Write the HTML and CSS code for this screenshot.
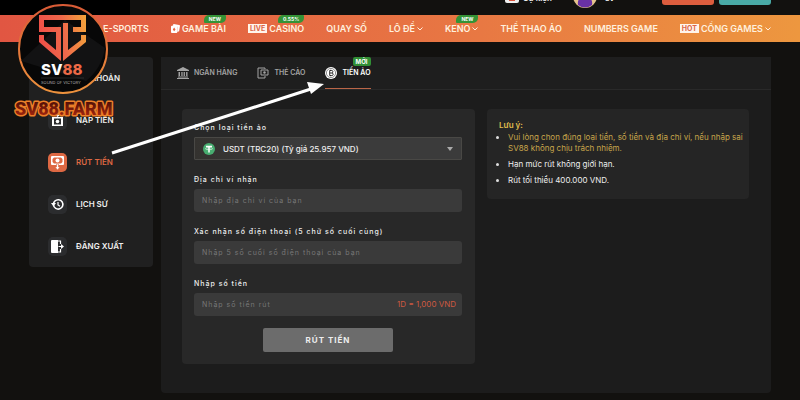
FILE: index.html
```html
<!DOCTYPE html>
<html lang="vi">
<head>
<meta charset="utf-8">
<meta name="viewport" content="width=device-width, initial-scale=1">
<title>SV88 - Rút tiền</title>
<link rel="stylesheet" href="styles.css">
</head>
<body>
<header class="topbar">
  <a class="event" href="#"><svg class="event-icon" viewBox="0 0 14 14"><rect width="14" height="14" rx="2" fill="#eee"/><path d="M4 7h6v5H4z" fill="#d9533c"/></svg>Sự kiện</a>
  <svg class="avatar" viewBox="0 0 26 26"><circle cx="13" cy="13" r="12" fill="#e6c48d"/><path d="M6 22q-1-6 4-8l3 2 3-2q5 2 4 8-7 5-14 0" fill="#6931a5"/><circle cx="13" cy="11" r="5" fill="#8042c1"/></svg>
  <span class="user">sv</span>
  <button class="top-button" type="button" aria-label="Nạp tiền"></button>
  <button class="top-button teal" type="button" aria-label="Rút tiền"></button>
</header>
<nav class="nav">
  <a href="#">E-SPORTS</a>
  <a href="#"><svg class="cards" viewBox="0 0 10 10"><path d="M3 0l6 1q1 0 1 1L9 8l-2 1V3L2 2V1z" fill="#fff"/><path fill-rule="evenodd" d="M1 2h5q1 0 1 1v6q0 1-1 1H1Q0 10 0 9V3q0-1 1-1m2.500 2L2 6l1.500 2L5 6z" fill="#fff"/></svg>GAME BÀI<span class="flag">NEW</span></a>
  <a href="#"><span class="tag">LIVE</span>CASINO<span class="flag">0.55%</span></a>
  <a href="#">QUAY SỐ</a>
  <a href="#">LÔ ĐỀ<svg class="chevron" viewBox="0 0 6 4"><path d="M.5.5L3 3 5.500.5"/></svg></a>
  <a href="#">KENO<svg class="chevron" viewBox="0 0 6 4"><path d="M.5.5L3 3 5.500.5"/></svg><span class="flag">NEW</span></a>
  <a href="#">THỂ THAO ẢO</a>
  <a href="#">NUMBERS GAME</a>
  <a href="#"><span class="tag">HOT</span>CỔNG GAMES<svg class="chevron" viewBox="0 0 6 4"><path d="M.5.5L3 3 5.500.5"/></svg></a>
</nav>
<div class="layout">
  <aside class="sidebar">
    <a href="#"><svg viewBox="0 0 19 19"><circle cx="9.500" cy="7" r="3"/><path d="M4 15q0-4 5.500-4t5.500 4z"/></svg>TÀI KHOẢN</a>
    <a href="#"><svg viewBox="0 0 19 19"><path fill-rule="evenodd" d="M4 6h11v9H4zm2 1.500v6h7v-6z"/><circle cx="9.500" cy="10.500" r="1.800"/><path d="M8.500 2h2v2H12L9.500 6 7 4h1.500z"/></svg>NẠP TIỀN</a>
    <a class="active" href="#"><svg viewBox="0 0 19 19"><path fill-rule="evenodd" d="M4 3h11q1 0 1 1v7q0 1-1 1H4q-1 0-1-1V4q0-1 1-1m2 1.500L4.500 6v3L6 10.500h7L14.500 9V6L13 4.500z"/><circle cx="9.500" cy="7.500" r="2"/><path d="M8.500 11h2v3H12l-2.500 3L7 14h1.500z" stroke="#dd6843" stroke-width=".6"/></svg>RÚT TIỀN</a>
    <a href="#"><svg viewBox="0 0 19 19"><path d="M5.500 10a4.700 4.700 0 1 0 1.400-4A4.700 4.700 0 0 0 5.500 9" fill="none" stroke="#fff" stroke-width="1.600"/><path d="M3 8h5l-2.500 3.500z"/><path d="M10 7v3l2 1.200" fill="none" stroke="#fff" stroke-width="1.200"/></svg>LỊCH SỬ</a>
    <a href="#"><svg viewBox="0 0 19 19"><path d="M4 3h6v13H4q-1 0-1-1V4q0-1 1-1"/><path d="M10 4h2.500v3M12.500 12v3H10M10.500 9.500H14" fill="none" stroke="#fff" stroke-width="1.200"/><path d="M13 7l3 2.500-3 2.500z"/></svg>ĐĂNG XUẤT</a>
  </aside>
  <main class="panel">
    <nav class="tabs">
      <a href="#"><svg viewBox="0 0 12 12"><path d="M0 4V3l6-3 6 3v1zM1.500 5h1.500v4H1.500zm2.800 0h1.300v4H4.300zm2.300 0h1.300v4H6.600zm2.500 0h1.400v4H9.100zM1 9.500h10v1H1zM0 11h12v1H0z"/></svg>NGÂN HÀNG</a>
      <a href="#"><svg viewBox="0 0 12 12"><path d="M8 2V1H1v10h7V9M4 3h7v5H4z" fill="none" stroke="currentColor"/><circle cx="7.500" cy="5.500" r="1.200"/></svg>THẺ CÀO</a>
      <a class="current" href="#"><svg viewBox="0 0 12 12"><circle cx="6" cy="6" r="6"/><circle cx="6" cy="6" r="4.600" fill="none" stroke="#1c1c1c" stroke-width=".5"/><path d="M4.700 3.500h2q1.200 0 1.200 1.200T6.700 6q1.500 0 1.500 1.300T6.700 8.500h-2zM4.700 6h2M5.800 2.700v.8M5.800 8.500v.8" fill="none" stroke="#1c1c1c" stroke-width=".9"/></svg>TIỀN ẢO<span class="new">MỚI</span></a>
    </nav>
    <div class="content">
      <form class="card form">
        <label for="coin">Chọn loại tiền ảo</label>
        <div class="field">
          <svg class="usdt" viewBox="0 0 12 12"><circle cx="6" cy="6" r="6" fill="#48ad70"/><path d="M3 3.500h6M6 3.500v6" stroke="#fff" stroke-width="1.500"/><ellipse cx="6" cy="5.700" rx="3.500" ry="1" fill="none" stroke="#fff" stroke-width=".6"/></svg>
          <select id="coin"><option>USDT (TRC20) (Tỷ giá 25.957 VND)</option></select>
          <svg class="caret" viewBox="0 0 6 4"><path d="M0 0h6L3 4z" fill="#aaa"/></svg>
        </div>
        <label for="wallet">Địa chỉ ví nhận</label>
        <div class="field"><input id="wallet" type="text" placeholder="Nhập địa chỉ ví của bạn"></div>
        <label for="phone">Xác nhận số điện thoại (5 chữ số cuối cùng)</label>
        <div class="field"><input id="phone" type="text" placeholder="Nhập 5 số cuối số điện thoại của bạn"></div>
        <label for="amount">Nhập số tiền</label>
        <div class="field"><input id="amount" type="text" placeholder="Nhập số tiền rút"><span class="rate">1D = 1,000 VND</span></div>
        <button class="submit" type="button">RÚT TIỀN</button>
      </form>
      <section class="card note">
        <h2>Lưu ý:</h2>
        <ul>
          <li class="warn">Vui lòng chọn đúng loại tiền, số tiền và địa chỉ ví, nếu nhập sai SV88 không chịu trách nhiệm.</li>
          <li>Hạn mức rút không giới hạn.</li>
          <li>Rút tối thiểu 400.000 VND.</li>
        </ul>
      </section>
    </div>
  </main>
</div>
<svg class="arrow" viewBox="0 0 220 80"><path d="M4 73L206 8" stroke="#fff" stroke-width="3"/><path d="M216 4l-13 10-4-12z" fill="#fff"/></svg>
<svg class="logo" viewBox="0 0 120 125">
  <defs>
    <linearGradient id="mark" gradientUnits="userSpaceOnUse" x1="39" y1="30" x2="86" y2="24"><stop offset="0" stop-color="#ef5148"/><stop offset=".5" stop-color="#ef684b"/><stop offset="1" stop-color="#f3a13b"/></linearGradient>
    <linearGradient id="ring" x1="0" y1="0" x2="0" y2="1"><stop offset="0" stop-color="#d95b36"/><stop offset="1" stop-color="#ed923d"/></linearGradient>
    <linearGradient id="fire" x1="0" y1="0" x2="0" y2="1"><stop offset="0" stop-color="#3b0905"/><stop offset="1" stop-color="#b52a10"/></linearGradient>
  </defs>
  <circle cx="63" cy="49" r="44" fill="#070707" stroke="url(#ring)" stroke-width="2"/>
  <path d="M21 61L65 20l40 28q-3 20-19 33z" fill="#121213"/>
  <g fill="url(#mark)">
    <path d="M39 15H86V32H73V27H81V20H44V27H61V61L39 42V35H44V40L56 50V32H39Z"/>
    <path d="M63 23H68V50L81 40V35H86V42L63 61Z"/>
  </g>
  <text class="brand" x="41" y="75">SV<tspan fill="#ed6946">88</tspan></text>
  <path d="M41 78h43" stroke="#555" stroke-width=".4"/>
  <text class="slogan" x="41" y="84">SOUND OF VICTORY</text>
  <text class="domain" x="15" y="115">SV88.FARM</text>
</svg>
</body>
</html>
```
FILE: styles.css
```css
* { box-sizing: border-box; }
body { margin: 0; min-height: 100vh; position: relative; background: #12110f; color: #eee; font: 8px/12px Inter, "Noto Sans", sans-serif; }
a { color: inherit; text-decoration: none; }
button, input, select { font: inherit; border: 0; margin: 0; }
svg { flex: none; }
.topbar { height: 15px; padding-right: 29px; display: flex; justify-content: flex-end; align-items: flex-start; overflow: hidden; background: linear-gradient(90deg, #000 0 130px, #12110f 130px); }
.event { display: flex; align-items: center; gap: 4px; font-weight: 600; margin: -8px 20px 0 0; line-height: 12px; }
.event-icon { width: 14px; height: 14px; margin-top: -4px; }
.avatar { width: 26px; height: 26px; margin-top: -17px; }
.user { width: 59px; margin-top: -8px; padding-left: 7px; font-weight: 700; line-height: 12px; }
.top-button { width: 52px; height: 20px; margin: -15px 0 0 5px; border-radius: 3px; background: #dc5d3e; }
.teal { background: #49aaa6; }
.nav { height: 27px; padding: 0 29px 0 103px; display: flex; align-items: center; justify-content: space-between; background: linear-gradient(90deg, #e15642, #e87843 60%, #ed973f); color: #fff0df; font-size: 9px; font-weight: 600; }
.nav a { position: relative; display: flex; align-items: center; gap: 2px; height: 27px; white-space: nowrap; }
.cards { width: 9px; height: 9px; }
.chevron { width: 6px; height: 4px; fill: none; stroke: #fff0df; }
.tag { background: #fff4eb; color: #dc6548; padding: 0 2px; line-height: 9px; font-size: 7px; font-weight: 700; }
.flag { position: absolute; right: 0; top: 0; padding: 0 5px; border-radius: 5px 1px; background: #349336; color: #fff; font-size: 5px; line-height: 8px; font-weight: 700; }
.layout { display: flex; align-items: flex-start; gap: 8px; padding: 15px 29px 7px; }
.sidebar { flex: none; width: 124px; border-radius: 4px; background: #202020; font-weight: 600; }
.sidebar a { height: 42px; padding-left: 19px; display: flex; align-items: center; gap: 9px; }
.sidebar svg { width: 19px; height: 19px; border-radius: 5px; background: #2b2c2e; fill: #fff; }
.sidebar .active { color: #dd6843; }
.sidebar .active svg { background: #dd6843; }
.panel { flex: 1; min-width: 0; border-radius: 4px; background: #1c1c1c; }
.tabs { height: 33px; padding-left: 16px; display: flex; gap: 20px; border-bottom: 1px solid #292929; background: #1e1e1e; color: #a4a4a4; font-size: 7px; font-weight: 600; }
.tabs a { position: relative; display: flex; align-items: center; gap: 5px; height: 32px; }
.tabs svg { width: 12px; height: 12px; fill: currentColor; }
.tabs .current { color: #fff; border-bottom: 1px solid #ba6547; }
.new { position: absolute; top: 0; right: 0; padding: 0 3px; border-radius: 2px; background: #318f35; line-height: 9px; font-size: 6px; font-weight: 700; }
.content { display: grid; grid-template-columns: 293fr 262fr; gap: 12px; align-items: start; padding: 19px 22px 29px 21px; }
.card { border-radius: 4px; background: #282828; }
.form { padding: 10px 13px 12px 12px; display: flex; flex-direction: column; }
.form label { line-height: 18px; letter-spacing: 1px; font-size: 7px; font-weight: 500; }
.field { position: relative; height: 23px; margin-bottom: 11px; }
.field input, .field select { width: 100%; height: 100%; border-radius: 3px; background: #3a3a3a; color: #eee; padding: 0 8px; outline: 0; }
.field input { letter-spacing: 1px; font-size: 7px; }
.field input::placeholder { color: #777; opacity: 1; }
.field select { appearance: none; padding-left: 28px; border: 1px solid #494845; border-radius: 1px; font-weight: 500; background: linear-gradient(90deg, #34322f, #3b3b3b 40%); }
.usdt { position: absolute; left: 9px; top: 6px; width: 12px; height: 12px; }
.caret { position: absolute; right: 9px; top: 10px; width: 6px; height: 4px; }
.rate { position: absolute; right: 6px; top: 0; line-height: 22px; color: #cd5941; }
.submit { align-self: center; width: 130px; height: 24px; margin-top: 1px; border-radius: 2px; background: #6c6c6c; color: #eee; font-weight: 700; letter-spacing: 1px; }
.note { min-height: 90px; padding: 10px 4px 8px 12px; background: #252525; line-height: 11px; }
.note h2 { margin: 0; font-size: 8px; line-height: 13px; font-weight: 600; color: #e0bd4d; }
.note ul { margin: 0; padding-left: 9px; }
.note li { margin-bottom: 5px; }
.note li::marker { color: #ddd; }
.note .warn { color: #c8a54b; }
.arrow { position: absolute; left: 108px; top: 80px; width: 220px; height: 80px; }
.logo { position: absolute; left: 0; top: 0; width: 120px; height: 125px; }
.brand { fill: #fff; font: 800 15px Inter, sans-serif; }
.slogan { fill: #aaa; font: 400 4px Inter, sans-serif; }
.domain { fill: url(#fire); stroke: #ed7f28; stroke-width: 3px; stroke-linejoin: round; paint-order: stroke; font: 900 18px Roboto, sans-serif; }
```
